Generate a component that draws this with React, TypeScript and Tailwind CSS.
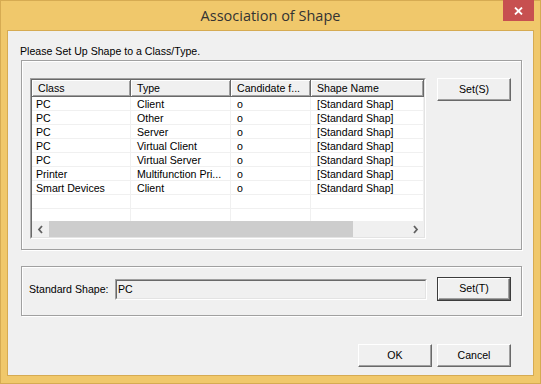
import React from "react";

const rows = [
  ["PC", "Client", "o", "[Standard Shap]"],
  ["PC", "Other", "o", "[Standard Shap]"],
  ["PC", "Server", "o", "[Standard Shap]"],
  ["PC", "Virtual Client", "o", "[Standard Shap]"],
  ["PC", "Virtual Server", "o", "[Standard Shap]"],
  ["Printer", "Multifunction Pri...", "o", "[Standard Shap]"],
  ["Smart Devices", "Client", "o", "[Standard Shap]"],
  ["", "", "", ""],
  ["", "", "", ""],
  ["", "", "", ""],
];

const cols = ["w-[99px]", "w-[100px]", "w-[80px]", "w-[113px]"];
const headers = ["Class", "Type", "Candidate f...", "Shape Name"];

function Btn({ label, def = false }: { label: string; def?: boolean }) {
  return (
    <div className={`w-[74px] ${def ? "h-[24px] border border-[#3c3c3c]" : "h-[23px]"} shrink-0`}>
      <div className="w-full h-full bg-[#f0f0f0] border-t border-l border-t-white border-l-white border-b border-r border-b-[#696969] border-r-[#696969] shadow-[inset_-1px_-1px_0_#a0a0a0] flex items-center justify-center text-black">
        {label}
      </div>
    </div>
  );
}

function Chevron({ dir }: { dir: "l" | "r" }) {
  return (
    <svg width="7" height="9" viewBox="0 0 7 9">
      <polyline
        points={dir === "l" ? "5,1 2,4.5 5,8" : "2,1 5,4.5 2,8"}
        fill="none"
        stroke="#606060"
        strokeWidth="1.8"
      />
    </svg>
  );
}

export default function App() {
  return (
    <div className="w-[541px] h-[384px] bg-[#f0c86b] border border-[#d6ab52] flex flex-col font-['Liberation_Sans',Arial,sans-serif] text-[10.6px] text-black">
      {/* Title bar */}
      <div className="relative h-[29px] flex items-center justify-center">
        <span className="font-['Open_Sans',sans-serif] text-[14.5px] text-[#333] pt-[1px]">Association of Shape</span>
        <div className="absolute top-[-1px] right-[6px] w-[31px] h-[21px] bg-[#c75050] flex items-center justify-center">
          <svg width="9" height="8" viewBox="0 0 9 8">
            <path d="M1 0.5 L8 7.5 M8 0.5 L1 7.5" stroke="#fff" strokeWidth="1.8" />
          </svg>
        </div>
      </div>

      {/* Client */}
      <div className="flex-1 px-[6px] pb-[7px] flex">
        <div className="flex-1 bg-[#f0f0f0] border border-[#d6ab52] flex flex-col pl-[12px] pr-[11px]">
          <div className="pt-[14px] h-[27px] leading-[13px]">Please Set Up Shape to a Class/Type.</div>

          {/* Group 1 */}
          <div className="mt-[2px] ml-px h-[190px] border border-[#a0a0a0] shadow-[inset_1px_1px_0_#fff,1px_1px_0_#fff] flex items-start pl-[8px] pt-[17px]">
            <div className="w-[396px] h-[161px] border border-t-[#a0a0a0] border-l-[#a0a0a0] border-b-white border-r-white">
              <div className="w-full h-full border border-t-[#696969] border-l-[#696969] border-b-[#e3e3e3] border-r-[#e3e3e3] bg-white flex flex-col overflow-hidden">
                <div className="h-[17px] flex shrink-0">
                  {headers.map((h, i) => (
                    <div
                      key={i}
                      className={`${cols[i]} shrink-0 h-full bg-[#f0f0f0] border-r border-b border-[#696969] shadow-[inset_1px_1px_0_#fff,inset_-1px_-1px_0_#a0a0a0] pl-[6px] leading-[16px] whitespace-nowrap overflow-hidden`}
                    >
                      {h}
                    </div>
                  ))}
                </div>
                <div className="flex-1 overflow-hidden">
                  {rows.map((r, ri) => (
                    <div key={ri} className="h-[14px] flex">
                      {r.map((c, ci) => (
                        <div
                          key={ci}
                          className={`${cols[ci]} shrink-0 h-full border-r border-b border-[#f0f0f0] ${ci === 0 ? "pl-[4px]" : "pl-[6px]"} leading-[14px] whitespace-nowrap overflow-hidden`}
                        >
                          {c}
                        </div>
                      ))}
                    </div>
                  ))}
                </div>
                <div className="h-[16px] flex shrink-0 bg-[#f0f0f0]">
                  <div className="w-[17px] flex items-center justify-center">
                    <Chevron dir="l" />
                  </div>
                  <div className="w-[304px] bg-[#cdcdcd]" />
                  <div className="flex-1" />
                  <div className="w-[17px] flex items-center justify-center">
                    <Chevron dir="r" />
                  </div>
                </div>
              </div>
            </div>
            <div className="ml-[11px]">
              <Btn label="Set(S)" />
            </div>
          </div>

          {/* Group 2 */}
          <div className="mt-[16px] ml-px h-[50px] border border-[#a0a0a0] shadow-[inset_1px_1px_0_#fff,1px_1px_0_#fff] flex items-start pl-[7px] pt-[10px]">
            <div className="w-[86px] h-[24px] leading-[24px] shrink-0">Standard Shape:</div>
            <div className="mt-[2px] w-[312px] h-[21px] border border-t-[#a0a0a0] border-l-[#a0a0a0] border-b-white border-r-white shrink-0">
              <div className="w-full h-full border border-t-[#696969] border-l-[#696969] border-b-[#e3e3e3] border-r-[#e3e3e3] bg-[#f0f0f0] pl-[1px] leading-[17px]">
                PC
              </div>
            </div>
            <div className="ml-[10px]">
              <Btn label="Set(T)" def />
            </div>
          </div>

          {/* Bottom buttons */}
          <div className="mt-[28px] mr-[11px] flex justify-end gap-[5px]">
            <Btn label="OK" />
            <Btn label="Cancel" />
          </div>
        </div>
      </div>
    </div>
  );
}
